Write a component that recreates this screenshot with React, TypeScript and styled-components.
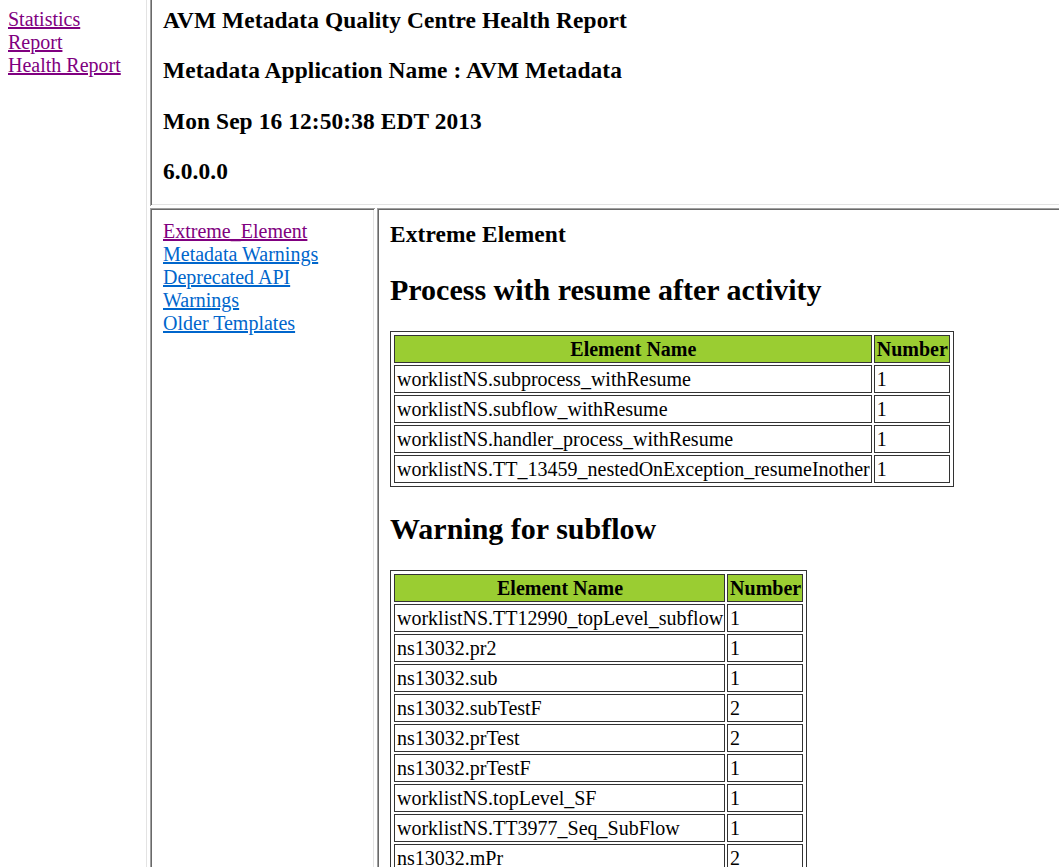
import React from "react";
import styled, { createGlobalStyle } from "styled-components";

const GlobalStyle = createGlobalStyle`
  html, body {
    margin: 0;
    padding: 0;
    height: 100%;
    overflow: hidden;
    background: #ffffff;
  }
  body {
    font-family: "Liberation Serif", "Times New Roman", serif;
    font-size: 20px;
    color: #000000;
  }
  #root {
    height: 100%;
  }
`;

const Page = styled.div`
  display: flex;
  height: 100vh;
  background: #ffffff;
`;

const SideFrame = styled.div`
  width: 148px;
  flex: none;
  box-sizing: border-box;
  padding: 8px;
  box-shadow: inset -1px 0 0 #ffffff, inset -2px 0 0 #e3e3e3;
`;

const MainColumn = styled.div`
  flex: 1;
  display: flex;
  flex-direction: column;
  gap: 2px;
  margin-left: 2px;
  min-width: 0;
`;

const Frame = styled.div<{ $top?: boolean; $bottomLight?: boolean; $rightLight?: boolean }>`
  box-sizing: border-box;
  overflow: hidden;
  background: #ffffff;
  box-shadow: ${(p) =>
    [
      p.$top ? "inset 0 1px 0 #a0a0a0" : null,
      "inset 1px 0 0 #a0a0a0",
      p.$bottomLight ? "inset 0 -1px 0 #ffffff" : null,
      p.$rightLight ? "inset -1px 0 0 #ffffff" : null,
      p.$top ? "inset 0 2px 0 #696969" : null,
      "inset 2px 0 0 #696969",
      p.$bottomLight ? "inset 0 -2px 0 #e3e3e3" : null,
      p.$rightLight ? "inset -2px 0 0 #e3e3e3" : null,
    ]
      .filter(Boolean)
      .join(", ")};
`;

const TopFrame = styled(Frame)`
  height: 206px;
  flex: none;
  padding: 7px 13px 0 13px;
`;

const LowerRow = styled.div`
  flex: 1;
  display: flex;
  gap: 2px;
  min-height: 0;
`;

const NavFrame = styled(Frame)`
  width: 225px;
  flex: none;
  padding: 12px 13px;
`;

const ContentFrame = styled(Frame)`
  flex: 1;
  padding: 13px 13px;
`;

const NavLink = styled.a<{ $visited?: boolean }>`
  display: block;
  color: ${(p) => (p.$visited ? "#800080" : "#0066cc")};
  text-decoration: underline;
  font-size: 20px;
  line-height: 23px;
  cursor: pointer;
  white-space: nowrap;
`;

const Heading3 = styled.h3`
  font-size: 23.4px;
  font-weight: bold;
  margin: 23.4px 0;
  letter-spacing: 0.1px;
  &:first-child {
    margin-top: 0;
  }
`;

const Heading2 = styled.h2`
  font-size: 30px;
  font-weight: bold;
  margin: 24.5px 0;
`;

const ReportTable = styled.table`
  border: 1px solid #333333;
  padding: 1px;
  border-spacing: 2px;
  font-size: 20px;
`;

const HeadCell = styled.th`
  background: #9acd32;
  border: 1px solid #333333;
  padding: 1px 1px 1px 2px;
  line-height: 24px;
  font-weight: bold;
  text-align: center;
  white-space: nowrap;
`;

const Cell = styled.td`
  border: 1px solid #333333;
  padding: 1px 1px 1px 2px;
  line-height: 24px;
  text-align: left;
  white-space: nowrap;
`;

type Row = [string, number];

const resumeRows: Row[] = [
  ["worklistNS.subprocess_withResume", 1],
  ["worklistNS.subflow_withResume", 1],
  ["worklistNS.handler_process_withResume", 1],
  ["worklistNS.TT_13459_nestedOnException_resumeInother", 1],
];

const subflowRows: Row[] = [
  ["worklistNS.TT12990_topLevel_subflow", 1],
  ["ns13032.pr2", 1],
  ["ns13032.sub", 1],
  ["ns13032.subTestF", 2],
  ["ns13032.prTest", 2],
  ["ns13032.prTestF", 1],
  ["worklistNS.topLevel_SF", 1],
  ["worklistNS.TT3977_Seq_SubFlow", 1],
  ["ns13032.mPr", 2],
  ["ns13032.subTest", 1],
];

const DataTable: React.FC<{ rows: Row[] }> = ({ rows }) => (
  <ReportTable>
    <tbody>
      <tr>
        <HeadCell>Element Name</HeadCell>
        <HeadCell>Number</HeadCell>
      </tr>
      {rows.map(([name, n], i) => (
        <tr key={i}>
          <Cell>{name}</Cell>
          <Cell>{n}</Cell>
        </tr>
      ))}
    </tbody>
  </ReportTable>
);

export default function App() {
  return (
    <>
      <GlobalStyle />
      <Page>
        <SideFrame>
          <NavLink $visited>Statistics</NavLink>
          <NavLink $visited>Report</NavLink>
          <NavLink $visited>Health Report</NavLink>
        </SideFrame>
        <MainColumn>
          <TopFrame $bottomLight>
            <Heading3>AVM Metadata Quality Centre Health Report</Heading3>
            <Heading3>Metadata Application Name : AVM Metadata</Heading3>
            <Heading3>Mon Sep 16 12:50:38 EDT 2013</Heading3>
            <Heading3>6.0.0.0</Heading3>
          </TopFrame>
          <LowerRow>
            <NavFrame $top $rightLight>
              <NavLink $visited>Extreme_Element</NavLink>
              <NavLink>Metadata Warnings</NavLink>
              <NavLink>Deprecated API</NavLink>
              <NavLink>Warnings</NavLink>
              <NavLink>Older Templates</NavLink>
            </NavFrame>
            <ContentFrame $top>
              <Heading3>Extreme Element</Heading3>
              <Heading2>Process with resume after activity</Heading2>
              <DataTable rows={resumeRows} />
              <Heading2>Warning for subflow</Heading2>
              <DataTable rows={subflowRows} />
            </ContentFrame>
          </LowerRow>
        </MainColumn>
      </Page>
    </>
  );
}
